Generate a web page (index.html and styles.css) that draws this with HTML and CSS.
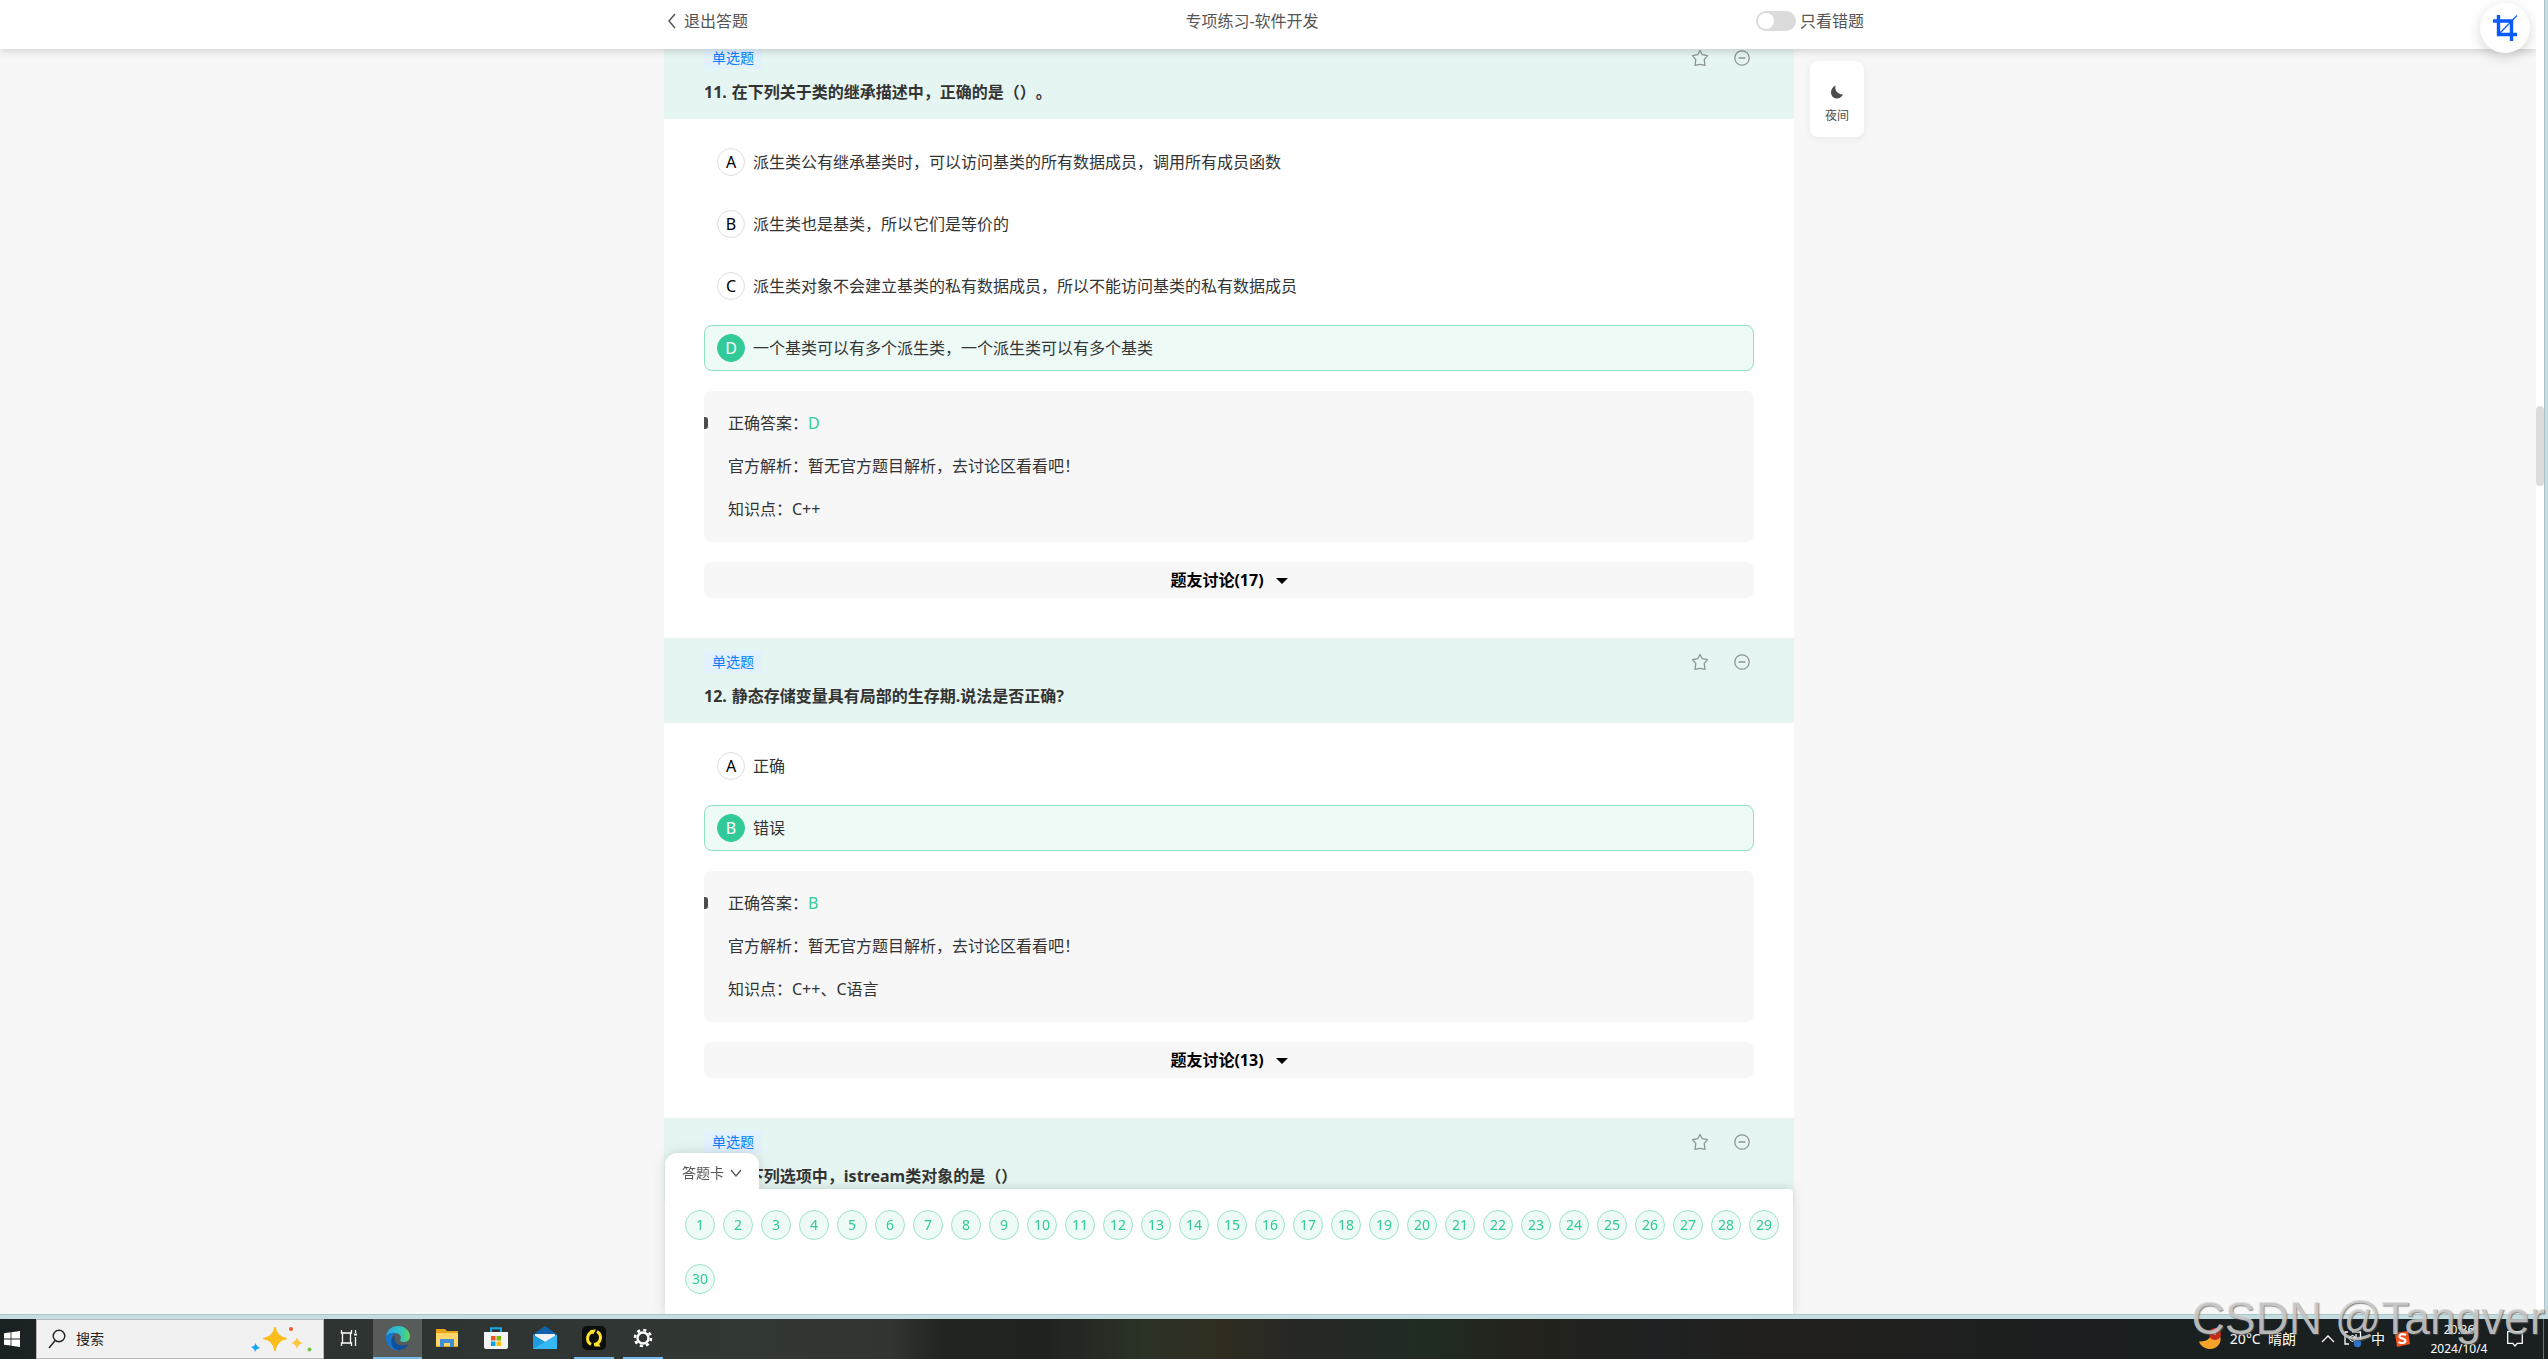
FILE: index.html
```html
<!DOCTYPE html>
<html lang="zh-CN">
<head>
<meta charset="utf-8">
<title>专项练习-软件开发</title>
<link rel="stylesheet" href="styles.css">
</head>
<body>
<svg class="defs" width="0" height="0" aria-hidden="true">
  <symbol id="star" viewBox="0 0 18 18"><path d="M9 1.500l2.300 4.200 5.200 1-3.300 3.900.8 5.700c-1.800.3-2.600-.9-5-.9s-3.200 1.200-5 .9l.8-5.700L1.500 6.700l5.200-1z" fill="none" stroke="#909493" stroke-width="1.300" stroke-linejoin="round"/></symbol>
  <symbol id="minus" viewBox="0 0 18 18"><circle cx="9" cy="9" r="7.200" fill="none" stroke="#909493" stroke-width="1.300"/><path d="M5.500 9h7" stroke="#909493" stroke-width="1.500"/></symbol>
</svg>
<div class="desktop">
  <div class="browser">
    <div class="page">
      <header class="topbar">
        <div class="topbar-inner">
          <a class="back" href="#"><svg width="16" height="16" viewBox="0 0 16 16"><path d="M11 1L5 8l6 7" fill="none" stroke="#555" stroke-width="1.500"/></svg>退出答题</a>
          <h1 class="topbar-title">专项练习-软件开发</h1>
          <label class="wrong-only"><input class="switch" type="checkbox">只看错题</label>
        </div>
      </header>
      <div class="scroller">
        <div class="layout">
          <main class="questions">
            <section class="question">
              <div class="question-head">
                <div class="question-meta"><span class="tag">单选题</span>
                  <button class="icon-btn" aria-label="收藏"><svg width="18" height="18"><use href="#star"/></svg></button>
                  <button class="icon-btn" aria-label="移除"><svg width="18" height="18"><use href="#minus"/></svg></button>
                </div>
                <h2 class="question-title"><span>11.</span><span>在下列关于类的继承描述中，正确的是（）。</span></h2>
              </div>
              <div class="question-body">
                <div class="options">
                  <label class="option"><input type="radio" name="q11"><span class="letter">A</span><span class="option-text">派生类公有继承基类时，可以访问基类的所有数据成员，调用所有成员函数</span></label>
                  <label class="option"><input type="radio" name="q11"><span class="letter">B</span><span class="option-text">派生类也是基类，所以它们是等价的</span></label>
                  <label class="option"><input type="radio" name="q11"><span class="letter">C</span><span class="option-text">派生类对象不会建立基类的私有数据成员，所以不能访问基类的私有数据成员</span></label>
                  <label class="option correct"><input type="radio" name="q11" checked><span class="letter">D</span><span class="option-text">一个基类可以有多个派生类，一个派生类可以有多个基类</span></label>
                </div>
                <div class="analysis">
                  <p class="answer">正确答案：<span class="green">D</span></p>
                  <p>官方解析：暂无官方题目解析，去讨论区看看吧！</p>
                  <p>知识点：C++</p>
                </div>
                <button class="discuss">题友讨论(17)<span class="caret"></span></button>
              </div>
            </section>
            <section class="question">
              <div class="question-head">
                <div class="question-meta"><span class="tag">单选题</span>
                  <button class="icon-btn" aria-label="收藏"><svg width="18" height="18"><use href="#star"/></svg></button>
                  <button class="icon-btn" aria-label="移除"><svg width="18" height="18"><use href="#minus"/></svg></button>
                </div>
                <h2 class="question-title"><span>12.</span><span>静态存储变量具有局部的生存期.说法是否正确?</span></h2>
              </div>
              <div class="question-body">
                <div class="options">
                  <label class="option"><input type="radio" name="q12"><span class="letter">A</span><span class="option-text">正确</span></label>
                  <label class="option correct"><input type="radio" name="q12" checked><span class="letter">B</span><span class="option-text">错误</span></label>
                </div>
                <div class="analysis">
                  <p class="answer">正确答案：<span class="green">B</span></p>
                  <p>官方解析：暂无官方题目解析，去讨论区看看吧！</p>
                  <p>知识点：C++、C语言</p>
                </div>
                <button class="discuss">题友讨论(13)<span class="caret"></span></button>
              </div>
            </section>
            <section class="question">
              <div class="question-head">
                <div class="question-meta"><span class="tag">单选题</span>
                  <button class="icon-btn" aria-label="收藏"><svg width="18" height="18"><use href="#star"/></svg></button>
                  <button class="icon-btn" aria-label="移除"><svg width="18" height="18"><use href="#minus"/></svg></button>
                </div>
                <h2 class="question-title"><span>13.</span><span>在下列选项中，istream类对象的是（）</span></h2>
              </div>
            </section>
          </main>
          <button class="night">
            <svg width="16" height="16" viewBox="0 0 16 16"><path d="M6.500 1.500C5.500 6 8 10 14 10.500 12 14.500 7.500 15.500 4.500 13.500.5 10.500 1.500 4 6.500 1.500z" fill="#4c4c4c"/></svg>
            夜间
          </button>
        </div>
      </div>
      <div class="card-layer">
        <div class="card">
          <button class="card-tab">答题卡<svg width="12" height="12" viewBox="0 0 12 12"><path d="M1 3l5 6 5-6" fill="none" stroke="#555" stroke-width="1.300"/></svg></button>
          <div class="card-panel">
            <button>1</button><button>2</button><button>3</button><button>4</button><button>5</button><button>6</button><button>7</button><button>8</button><button>9</button><button>10</button><button>11</button><button>12</button><button>13</button><button>14</button><button>15</button><button>16</button><button>17</button><button>18</button><button>19</button><button>20</button><button>21</button><button>22</button><button>23</button><button>24</button><button>25</button><button>26</button><button>27</button><button>28</button><button>29</button><button>30</button>
          </div>
        </div>
      </div>
      <button class="crop-btn" aria-label="截图">
        <svg width="26" height="26" viewBox="0 0 26 26" fill="none" stroke="#0a5cff"><path d="M6.500 0v19.500H25M1 6h18.500v20" stroke-width="3.400"/><path d="M8 18L25 .5" stroke-width="1.200"/></svg>
      </button>
    </div>
    <div class="scrollbar"><div class="thumb"></div></div>
  </div>
  <footer class="taskbar">
    <button class="start" aria-label="开始"><svg width="16" height="16" viewBox="0 0 16 16" fill="#fff"><path d="M0 2.200L6.600 1.300v6.200H0zM7.400 1.200L16 0v7.500H7.400zM0 8.400h6.600v6.200L0 13.700zM7.400 8.400H16V16l-8.600-1.200z"/></svg></button>
    <label class="search">
      <svg width="18" height="22" viewBox="0 0 18 22" fill="none" stroke="#222" stroke-width="1.400"><circle cx="11" cy="8" r="5.800"/><path d="M7.200 12.500L1 20"/></svg>
      <input type="text" placeholder="搜索" aria-label="搜索">
      <svg width="62" height="26" viewBox="0 0 62 26"><path d="M24 1q2 10 12 11.500Q26 14 24 25q-2-11-12-12.500Q22 11 24 1z" fill="#fbbd1c" stroke="#fbbd1c" stroke-linejoin="round"/><path d="M46 11q1 5 6 6-5 1-6 6-1-5-6-6 5-1 6-6z" fill="#fdc63d"/><path d="M4.500 17q1 3.500 5 5-4.500.5-5.500 4-.5-3.500-4-5 4-.500 4.500-4z" fill="#14a5f0"/><circle cx="40" cy="3" r="2" fill="#ee5a2a"/><circle cx="58.500" cy="23.500" r="2" fill="#7cc142"/></svg>
    </label>
    <nav class="apps">
      <button class="app" aria-label="任务视图"><svg width="18" height="18" viewBox="0 0 18 18" fill="none" stroke="#fff" stroke-width="1.300"><path d="M1.500 1v3h10V1M1.500 17v-3h10v3M2.500 4v10M10.500 4v10M15.500 1v3M15.500 8v9"/><path d="M14 5.500h3" stroke-width="2"/></svg></button>
      <button class="app active running" aria-label="Edge"><svg width="26" height="26" viewBox="0 0 26 26"><defs><linearGradient id="eg" x1="0" x2="1"><stop offset="0" stop-color="#2ba8e8"/><stop offset=".6" stop-color="#2fc5c4"/><stop offset="1" stop-color="#5fd65a"/></linearGradient></defs><path d="M1 12C2 4 8 1 13 1c7 0 12 5 12 10 0 4-3 6-6 6-3.500 0-4.500-1.500-3.500-3C17 11 14 8 10 8c-5 0-8 2-9 4z" fill="url(#eg)"/><path d="M1 12c1-3 5-5 9-4-3 1.500-4 5-3 9 1.500 5 7 7 11 7-7 4-17-1-17-12z" fill="#1677cf"/><path d="M10 10c-2 5 1 11 8 10.500 2 0 4-1 5.500-1.500C21 24 15 26 11 24.500 5 22 5 13 10 10z" fill="#0e4f9e"/></svg></button>
      <button class="app" aria-label="文件资源管理器"><svg width="22" height="20" viewBox="0 0 22 20"><path d="M0 1h9l2 2h11v16H0z" fill="#e8a317"/><path d="M0 5h22v13H0z" fill="#ffd667"/><path d="M4 19v-8h14v8h-4v-4H8v4z" fill="#3f8fd8"/></svg></button>
      <button class="app" aria-label="应用商店"><svg width="24" height="24" viewBox="0 0 24 24"><path d="M7 8V2.200h10V8" fill="none" stroke="#1da6e8" stroke-width="2"/><path d="M0 6h24v15q0 2-3 2H3q-3 0-3-2z" fill="#f4f4f4"/><path d="M7 10h4.500v4.500H7z" fill="#f05022"/><path d="M12.500 10H17v4.500h-4.500z" fill="#7fba00"/><path d="M7 15.500h4.500V20H7z" fill="#00a4ef"/><path d="M12.500 15.500H17V20h-4.500z" fill="#ffb900"/></svg></button>
      <button class="app" aria-label="邮件"><svg width="24" height="24" viewBox="0 0 24 24"><path d="M0 8.500L12 0l12 8.500V23H0z" fill="#0f63ae"/><path d="M2 8h20v9H2z" fill="#f2f2f2"/><path d="M0 8.500L24 23H0z" fill="#1f9be0"/><path d="M24 8.500V23H0z" fill="#35b8f1"/></svg></button>
      <button class="app small running" aria-label="浏览器"><svg width="24" height="24" viewBox="0 0 24 24"><rect width="24" height="24" rx="5" fill="#0c0d0d"/><path d="M9 18.500A7 7 0 0 1 12 5.500M15 5.500a7 7 0 0 1-3 13" fill="none" stroke="#ffe22b" stroke-width="3"/><path d="M8 4l6-.5-3 5zM18.500 20.500l-6 0 3.500-4.500z" fill="#ffe22b"/></svg></button>
      <button class="app small running" aria-label="设置"><svg width="20" height="20" viewBox="0 0 20 20" fill="none" stroke="#fff"><circle cx="10" cy="10" r="5.500" stroke-width="2.400"/><circle cx="10" cy="10" r="8" stroke-width="2.600" stroke-dasharray="3.140 3.140"/></svg></button>
    </nav>
    <div class="tray">
      <span class="weather"><svg width="24" height="24" viewBox="0 0 24 24"><path d="M14 3c0 8-5 12-13 11.500C3 20 8 22 12 22c7-.5 11-5 10.500-11C22 6 19 3.500 14 3z" fill="#f7a32b"/><circle cx="17" cy="7" r="6" fill="#c42b1c"/><path d="M17 4v4" stroke="#fff"/></svg>20°C&nbsp; 晴朗</span>
      <svg width="14" height="14" viewBox="0 0 14 14"><path d="M1 10l6-6 6 6" fill="none" stroke="#fff" stroke-width="1.300"/></svg>
      <svg width="18" height="18" viewBox="0 0 18 18"><path d="M4 2H1v12h4M8 2h8.500v8" fill="none" stroke="#fff" stroke-width="1.300"/><path d="M5.500 8q3-5 6 0M11.500 9q-3 5-6 0M12 4v4H9" fill="none" stroke="#fff" stroke-width="1.200"/><circle cx="13.500" cy="13.500" r="3.700" fill="#2b74c7"/></svg>
      <span class="ime">中</span>
      <svg width="16" height="16" viewBox="0 0 16 16"><path d="M1 2L14 0l2 13-13 3z" fill="#f4511e"/><path d="M12 4C8 2 4 4 6 6.500c1.500 1.500 6 1 5.500 3.500-.5 2.500-5 2.500-7 .8" fill="none" stroke="#fff" stroke-width="2.200"/></svg>
      <span class="clock"><span>20:36</span><span>2024/10/4</span></span>
      <svg width="16" height="16" viewBox="0 0 16 16"><path d="M.7.700h14.600v11.600h-5L8 15l-2.300-2.700h-5z" fill="none" stroke="#fff" stroke-width="1.300"/></svg>
    </div>
    <button class="show-desktop" aria-label="显示桌面"></button>
  </footer>
  <div class="watermark">CSDN @Tangver</div>
</div>
</body>
</html>
```
FILE: styles.css
```css
* { box-sizing: border-box; margin: 0; }
body { font: 16px/24px "Noto Sans", "Noto Sans CJK SC", sans-serif; text-spacing-trim: space-all; color: #333; background: #c5dde0; overflow: hidden; }
button { font: inherit; color: inherit; border: 0; padding: 0; background: none; }
svg { display: block; flex: none; }
.defs { position: absolute; }

.desktop { position: relative; height: 100vh; display: flex; flex-direction: column; overflow: hidden; }
.browser { flex: 1; min-height: 0; display: flex; margin: 0 3px 4px 0; border: solid #a9c6ca; border-width: 0 1px 1px 0; }
.page { position: relative; flex: 1; min-width: 0; display: flex; flex-direction: column; background: #f7f7f7; overflow: hidden; }
.scrollbar { width: 8px; background: #fff; padding-top: 406px; }
.thumb { height: 80px; border-radius: 4px; background: #dcdcdc; }

/* Top bar */
.topbar { position: relative; z-index: 2; height: 49px; flex: none; background: #fff; box-shadow: 0 2px 8px rgba(0, 0, 0, .16); padding-right: 8px; }
.topbar-inner { max-width: 1200px; height: 42px; margin: 0 auto; display: flex; align-items: center; justify-content: space-between; color: #555; }
.topbar-title { font-size: 16px; font-weight: 400; }
.back { display: flex; align-items: center; gap: 4px; color: inherit; text-decoration: none; }
.wrong-only { display: flex; align-items: center; gap: 4px; }
.switch { appearance: none; width: 40px; height: 20px; margin: 0; padding: 2px; border-radius: 10px; background: #dbdbdb; }
.switch::before { content: ""; display: block; width: 16px; height: 16px; border-radius: 50%; background: #fff; }

/* Question list */
.scroller { flex: 1; min-height: 0; padding-right: 8px; overflow: hidden; }
.layout { max-width: 1200px; margin: -15px auto 0; display: flex; align-items: flex-start; gap: 16px; }
.questions { flex: 1; min-width: 0; background: #fff; }
.question-head { height: 85px; padding: 13px 40px 0; background: #e5f5f1; }
.question-meta { display: flex; align-items: center; gap: 24px; }
.tag { margin-right: auto; padding: 0 8px; font-size: 14px; line-height: 22px; border-radius: 2px; background: #e1f1fe; color: #0a7cff; }
.icon-btn { width: 18px; height: 18px; }
.icon-btn:last-child { margin-right: 3px; }
.question-title { display: flex; gap: 5px; margin-top: 11px; font-size: 16px; font-weight: 700; }
.question-body { padding: 20px 40px 40px; display: flex; flex-direction: column; gap: 20px; }
.options { display: flex; flex-direction: column; gap: 16px; }
.option { height: 46px; padding: 0 12px; display: grid; grid-template-columns: 28px 1fr; column-gap: 8px; align-items: center; border: 1px solid transparent; border-radius: 8px; }
.option input { appearance: none; grid-area: 1 / 1; width: 28px; height: 28px; margin: 0; border: 1px solid #dedede; border-radius: 50%; background: #fff; }
.letter { grid-area: 1 / 1; text-align: center; color: #000; z-index: 1; }
.correct { background: #edfaf6; border-color: #8fe0c5; }
.correct input { background: #32ca99; border-color: #32ca99; }
.correct .letter { color: #fff; }
.analysis { padding: 20px 24px; display: flex; flex-direction: column; gap: 18px; line-height: 25px; border-radius: 8px; background: #f7f7f7; }
.answer { display: flex; align-items: center; }
.answer::before { content: ""; width: 4px; height: 12px; margin: 0 20px 2px -24px; border-radius: 0 3px 3px 0; background: #4c4c4c; }
.green { color: #32ca99; }
.discuss { height: 36px; display: flex; align-items: center; justify-content: center; gap: 12px; font-weight: 700; color: #000; border-radius: 8px; background: #f7f7f7; }
.caret { border: solid transparent; border-width: 6px 6px 0; border-top-color: #000; margin-top: 2px; }
.night { width: 54px; height: 76px; margin-top: 27px; padding-top: 12px; display: flex; flex-direction: column; align-items: center; justify-content: center; gap: 6px; font-size: 12px; line-height: 20px; color: #4c4c4c; border-radius: 8px; background: #fff; box-shadow: 0 2px 8px rgba(0, 0, 0, .06); }

/* Answer card, floating over the list */
.card-layer { position: absolute; left: 0; right: 8px; bottom: 0; }
.card { max-width: 1200px; margin: 0 auto; padding: 0 71px 0 1px; filter: drop-shadow(0 0 6px rgba(0, 0, 0, .14)); }
.card-tab { width: 94px; height: 36px; padding-top: 4px; display: flex; align-items: center; justify-content: center; gap: 6px; font-size: 14px; color: #555; border-radius: 12px 12px 0 0; background: #fff; }
.card-panel { padding: 21px 14px 20px 20px; display: flex; flex-wrap: wrap; gap: 24px 8px; border-radius: 0 4px 0 0; background: #fff; }
.card-panel button { width: 30px; height: 30px; font-size: 14px; color: #32ca99; border: 1px solid #9be3cb; border-radius: 50%; background: #edfaf6; }
.crop-btn { position: absolute; z-index: 3; top: 3px; right: 6px; width: 50px; height: 50px; display: grid; place-items: center; border-radius: 50%; background: #fff; box-shadow: 0 4px 14px rgba(0, 0, 0, .16); }

/* Taskbar */
.taskbar { height: 40px; flex: none; display: flex; color: #fff; background: linear-gradient(90deg, #1a2123 0, #2d3331 13%, #323834 30%, #323432 35%, #22241f 37%, #202220 41%, #2b3326 45%, #312c20 48%, #262826 51%, #202c22 56%, #23221c 60%, #1f2222 65%, #211f1d 70%, #1a1f20 85%); }
.start { width: 36px; padding-left: 4px; }
.search { width: 288px; padding: 0 10px 0 11px; display: flex; align-items: center; gap: 10px; border: 1px solid #b9b9b9; background: #f1f1f1; }
.search input { flex: 1; min-width: 0; border: 0; padding: 0; background: none; font: inherit; font-size: 14px; outline: 0; }
.search input::placeholder { color: #222; }
.apps { flex: 1; display: flex; }
.app { width: 49px; height: 40px; display: grid; place-items: center; border-bottom: 2px solid transparent; }
.app.active { background: #575c5b; }
.running { border-bottom-color: #76b9ed; }
.app.small { width: 40px; margin: 0 4px 0 5px; }
.tray { display: flex; align-items: center; gap: 9px; padding-right: 20px; font-size: 14px; }
.weather { display: flex; align-items: center; gap: 8px; margin-right: 16px; }
.clock { width: 70px; margin: 0 4px 0 5px; text-align: center; font-size: 12px; line-height: 19px; display: flex; flex-direction: column; }
.show-desktop { width: 5px; border-left: 1px solid #6b6f70; }
.watermark { position: absolute; right: 3px; bottom: 14px; font: 46px/54px "Liberation Sans", sans-serif; color: rgba(215, 215, 215, .8); text-shadow: 1px 1px 1px rgba(90, 90, 90, .7); pointer-events: none; white-space: nowrap; }
```
